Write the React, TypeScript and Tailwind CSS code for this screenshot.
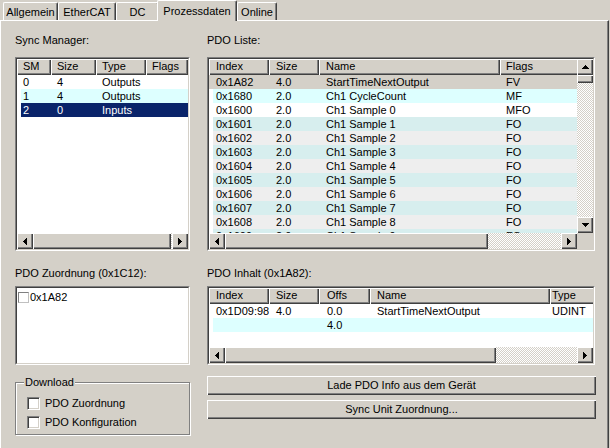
import React from 'react';

const raised =
  'bg-[#d4d0c8] shadow-[inset_1px_1px_0_#ffffff,inset_-1px_-1px_0_#404040,inset_-2px_-2px_0_#808080]';
const hatch =
  'bg-[image:repeating-conic-gradient(#ffffff_0_25%,#d4d0c8_0_50%)] bg-[length:2px_2px]';

type Dir = 'left' | 'right' | 'up' | 'down';

function Arrow({ dir }: { dir: Dir }) {
  const rects = [0, 1, 2, 3].map((i) => {
    if (dir === 'right') return { x: i, y: i, w: 1, h: 7 - 2 * i };
    if (dir === 'left') return { x: 3 - i, y: i, w: 1, h: 7 - 2 * i };
    if (dir === 'up') return { x: i, y: 3 - i, w: 7 - 2 * i, h: 1 };
    return { x: i, y: i, w: 7 - 2 * i, h: 1 };
  });
  const horiz = dir === 'left' || dir === 'right';
  return (
    <svg width={horiz ? 4 : 7} height={horiz ? 7 : 4} shapeRendering="crispEdges">
      {rects.map((r, i) => (
        <rect key={i} x={r.x} y={r.y} width={r.w} height={r.h} fill="#000" />
      ))}
    </svg>
  );
}

function ScrollBtn({ dir }: { dir: Dir }) {
  return (
    <div className={`${raised} w-[16px] h-[16px] shrink-0 flex items-center justify-center`}>
      <Arrow dir={dir} />
    </div>
  );
}

function HScroll({ thumb, corner }: { thumb: string; corner?: boolean }) {
  return (
    <div className="flex h-[16px] shrink-0 bg-[#d4d0c8]">
      <ScrollBtn dir="left" />
      <div className={`${raised} ${thumb} shrink-0`} />
      <div className={`flex-1 ${hatch}`} />
      <ScrollBtn dir="right" />
      {corner && <div className="w-[16px] shrink-0 bg-[#d4d0c8]" />}
    </div>
  );
}

function VScroll() {
  return (
    <div className="flex flex-col w-[16px] shrink-0">
      <ScrollBtn dir="up" />
      <div className={`${raised} h-[8px] shrink-0`} />
      <div className={`flex-1 ${hatch}`} />
      <ScrollBtn dir="down" />
    </div>
  );
}

function Sunken({ className, children }: { className: string; children?: React.ReactNode }) {
  return (
    <div className={`${className} border border-t-[#808080] border-l-[#808080] border-r-white border-b-white`}>
      <div className="h-full flex flex-col border border-t-[#404040] border-l-[#404040] border-r-[#d4d0c8] border-b-[#d4d0c8] bg-white overflow-hidden">
        {children}
      </div>
    </div>
  );
}

type Col = { label: string; w: string; pl: string };
type Row = { cells: string[]; bg: string; inset?: boolean };

function Table({ cols, rows }: { cols: Col[]; rows: Row[] }) {
  return (
    <div className="flex-1 flex flex-col min-w-0 overflow-hidden">
      <div className="flex h-[16px] shrink-0">
        {cols.map((c) => (
          <div key={c.label} className={`${raised} ${c.w} ${c.pl} shrink-0 leading-[15px] whitespace-nowrap overflow-hidden`}>
            {c.label}
          </div>
        ))}
      </div>
      <div className="flex-1 overflow-hidden">
        {rows.map((r, i) => (
          <div
            key={i}
            className={`flex h-[14px] leading-[14px] ${r.bg} ${r.inset === false ? '' : 'shadow-[inset_4px_0_0_#ffffff]'}`}
          >
            {cols.map((c, j) => (
              <div key={j} className={`${c.w} ${c.pl} shrink-0 whitespace-nowrap overflow-hidden`}>
                {r.cells[j]}
              </div>
            ))}
          </div>
        ))}
      </div>
    </div>
  );
}

function Check({ className }: { className?: string }) {
  return (
    <div
      className={`w-[13px] h-[13px] shrink-0 bg-white border border-t-[#808080] border-l-[#808080] border-r-white border-b-white shadow-[inset_1px_1px_0_#404040,inset_-1px_-1px_0_#d4d0c8] ${className ?? ''}`}
    />
  );
}

const tabs = [
  { label: 'Allgemein', w: 'w-[55px]' },
  { label: 'EtherCAT', w: 'w-[58px]' },
  { label: 'DC', w: 'w-[43px]' },
  { label: 'Prozessdaten', w: 'w-[80px]', active: true },
  { label: 'Online', w: 'w-[40px]' },
];

const smCols: Col[] = [
  { label: 'SM', w: 'w-[34px]', pl: 'pl-[6px]' },
  { label: 'Size', w: 'w-[45px]', pl: 'pl-[6px]' },
  { label: 'Type', w: 'w-[50px]', pl: 'pl-[6px]' },
  { label: 'Flags', w: 'w-[42px]', pl: 'pl-[6px]' },
];

const smRows: Row[] = [
  { cells: ['0', '4', 'Outputs', ''], bg: 'bg-white' },
  { cells: ['1', '4', 'Outputs', ''], bg: 'bg-[#ddffff]' },
  { cells: ['2', '0', 'Inputs', ''], bg: 'bg-[#0a246a] text-white' },
];

const pdoCols: Col[] = [
  { label: 'Index', w: 'w-[60px]', pl: 'pl-[7px]' },
  { label: 'Size', w: 'w-[50px]', pl: 'pl-[7px]' },
  { label: 'Name', w: 'w-[181px]', pl: 'pl-[7px]' },
  { label: 'Flags', w: 'w-[87px]', pl: 'pl-[6px]' },
];

const pdoRows: Row[] = [
  { cells: ['0x1A82', '4.0', 'StartTimeNextOutput', 'FV'], bg: 'bg-[#d4d0c8]', inset: false },
  { cells: ['0x1680', '2.0', 'Ch1 CycleCount', 'MF'], bg: 'bg-[#ddffff]' },
  { cells: ['0x1600', '2.0', 'Ch1 Sample 0', 'MFO'], bg: 'bg-white' },
  ...[1, 2, 3, 4, 5, 6, 7, 8, 9].map((n) => ({
    cells: [`0x160${n}`, '2.0', `Ch1 Sample ${n}`, 'FO'],
    bg: n % 2 === 1 ? 'bg-[#d7eeee]' : 'bg-[#eeeeee]',
  })),
];

const inhaltCols: Col[] = [
  { label: 'Index', w: 'w-[60px]', pl: 'pl-[7px]' },
  { label: 'Size', w: 'w-[50px]', pl: 'pl-[7px]' },
  { label: 'Offs', w: 'w-[51px]', pl: 'pl-[8px]' },
  { label: 'Name', w: 'w-[180px]', pl: 'pl-[7px]' },
  { label: 'Type', w: 'w-[60px]', pl: 'pl-[2px]' },
];

const inhaltRows: Row[] = [
  { cells: ['0x1D09:98', '4.0', '0.0', 'StartTimeNextOutput', 'UDINT'], bg: 'bg-white' },
  { cells: ['', '', '4.0', '', ''], bg: 'bg-[#ddffff]' },
];

export default function App() {
  return (
    <div className="w-[610px] h-[448px] overflow-hidden bg-[#d4d0c8] text-black text-[11px] font-['Liberation_Sans',Arial,sans-serif]">
      <div className="flex items-end h-[20px] pl-[3px]">
        {tabs.map((t) =>
          t.active ? (
            <div
              key={t.label}
              className={`${t.w} h-[21px] -mb-[1px] -ml-[2px] relative z-10 flex items-center justify-center bg-[#d4d0c8] border-l border-t border-l-white border-t-white border-r border-r-[#404040] shadow-[inset_-1px_0_0_#808080] rounded-t-[2px]`}
            >
              {t.label}
            </div>
          ) : (
            <div
              key={t.label}
              className={`${t.w} h-[18px] pt-[1px] flex items-center justify-center border-l border-t border-l-white border-t-white border-r border-r-[#404040] shadow-[inset_-1px_0_0_#808080] rounded-t-[2px]`}
            >
              {t.label}
            </div>
          )
        )}
      </div>

      <div className="w-[609px] h-[428px] border-t border-l border-t-white border-l-white border-r border-r-[#404040] shadow-[inset_-1px_0_0_#808080] flex gap-[17px] pl-[14px] pt-[12px]">
        {/* left column */}
        <div className="w-[175px] flex flex-col">
          <div className="h-[14px] leading-[14px]">Sync Manager:</div>
          <Sunken className="mt-[10px] h-[194px]">
            <Table cols={smCols} rows={smRows} />
            <HScroll thumb="w-[138px]" />
          </Sunken>

          <div className="mt-[15px] h-[14px] leading-[14px]">PDO Zuordnung (0x1C12):</div>
          <Sunken className="mt-[6px] h-[79px]">
            <div className="flex items-center h-[14px] mt-[2px] pl-[1px] leading-[14px]">
              <div className="w-[11px] h-[11px] bg-white border border-t-[#808080] border-l-[#808080] border-r-[#c0c0c0] border-b-[#c0c0c0]" />
              <span className="ml-[1px]">0x1A82</span>
            </div>
          </Sunken>

          <fieldset className="mt-[10px] h-[60px] p-0 border border-[#808080] shadow-[inset_1px_1px_0_#ffffff,1px_1px_0_#ffffff]">
            <legend className="ml-[8px] px-[1px] leading-[14px] bg-[#d4d0c8]">Download</legend>
            <div className="pl-[11px] pt-[5px]">
              <div className="flex items-center h-[19px]">
                <Check />
                <span className="ml-[5px]">PDO Zuordnung</span>
              </div>
              <div className="flex items-center h-[19px]">
                <Check />
                <span className="ml-[5px]">PDO Konfiguration</span>
              </div>
            </div>
          </fieldset>
        </div>

        {/* right column */}
        <div className="w-[389px] flex flex-col">
          <div className="h-[14px] leading-[14px]">PDO Liste:</div>
          <Sunken className="mt-[10px] h-[194px] w-[388px]">
            <div className="flex flex-1 min-h-0">
              <Table cols={pdoCols} rows={pdoRows} />
              <VScroll />
            </div>
            <HScroll thumb="w-[263px]" corner />
          </Sunken>

          <div className="mt-[15px] h-[14px] leading-[14px]">PDO Inhalt (0x1A82):</div>
          <Sunken className="mt-[6px] h-[79px] w-[388px]">
            <Table cols={inhaltCols} rows={inhaltRows} />
            <HScroll thumb="w-[271px]" />
          </Sunken>

          <button className={`${raised} mt-[11px] h-[19px] w-[389px] text-center leading-[19px]`}>
            Lade PDO Info aus dem Gerät
          </button>
          <button className={`${raised} mt-[5px] h-[19px] w-[389px] text-center leading-[19px]`}>
            Sync Unit Zuordnung...
          </button>
        </div>
      </div>
    </div>
  );
}
